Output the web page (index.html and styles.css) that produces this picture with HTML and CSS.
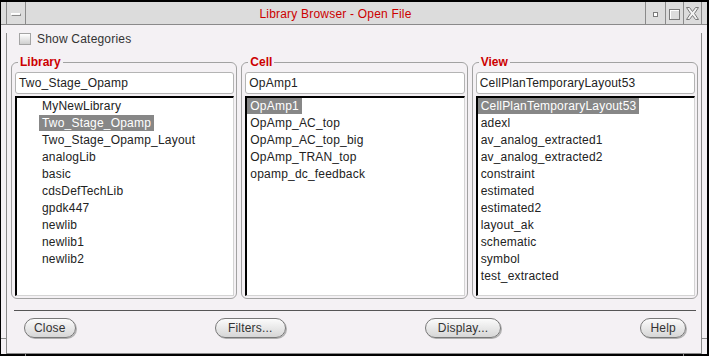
FILE: index.html
```html
<!DOCTYPE html>
<html>
<head>
    <title>Library Browser - Open File</title>
    <meta name="viewport" content="width=device-width, initial-scale=1.0">
    <link rel="stylesheet" href="styles.css">
</head>
<body>
<div class="window">
    <div class="titlebar">
        <div class="tb-edge"></div>
        <div class="tb-menu"><span class="menu-bar"></span></div>
        <div class="tb-title">Library Browser - Open File</div>
        <div class="tb-btn tb-wide"><span class="iconify"></span></div>
        <div class="tb-btn"><span class="maximize"></span></div>
        <div class="tb-btn">
            <svg width="13" height="13" viewBox="0 0 13 13">
                <polygon points="0.5,0.5 3.5,0.5 6.5,4.5 9.5,0.5 12.5,0.5 8.5,6.5 12.5,12.5 9.5,12.5 6.5,8.5 3.5,12.5 0.5,12.5 4.5,6.5" fill="#f2f2f2" stroke="#7a7a7a" stroke-width="1"/>
            </svg>
        </div>
        <div class="tb-edge tb-edge-right"></div>
    </div>

    <div class="frame">
        <span class="tick tick-left"></span>
        <span class="tick tick-right"></span>
        <span class="tick tick-foot-left"></span>
        <span class="tick tick-foot-right"></span>

        <div class="content">
            <div class="options">
                <span class="check"></span>
                <span>Show Categories</span>
            </div>

            <div class="panels">
                <fieldset class="group">
                    <legend>Library</legend>
                    <div class="field">Two_Stage_Opamp</div>
                    <ul class="list tree">
                        <li><span>MyNewLibrary</span></li>
                        <li class="selected"><span>Two_Stage_Opamp</span></li>
                        <li><span>Two_Stage_Opamp_Layout</span></li>
                        <li><span>analogLib</span></li>
                        <li><span>basic</span></li>
                        <li><span>cdsDefTechLib</span></li>
                        <li><span>gpdk447</span></li>
                        <li><span>newlib</span></li>
                        <li><span>newlib1</span></li>
                        <li><span>newlib2</span></li>
                    </ul>
                </fieldset>

                <fieldset class="group">
                    <legend>Cell</legend>
                    <div class="field">OpAmp1</div>
                    <ul class="list">
                        <li class="selected"><span>OpAmp1</span></li>
                        <li><span>OpAmp_AC_top</span></li>
                        <li><span>OpAmp_AC_top_big</span></li>
                        <li><span>OpAmp_TRAN_top</span></li>
                        <li><span>opamp_dc_feedback</span></li>
                    </ul>
                </fieldset>

                <fieldset class="group">
                    <legend>View</legend>
                    <div class="field">CellPlanTemporaryLayout53</div>
                    <ul class="list">
                        <li class="selected"><span>CellPlanTemporaryLayout53</span></li>
                        <li><span>adexl</span></li>
                        <li><span>av_analog_extracted1</span></li>
                        <li><span>av_analog_extracted2</span></li>
                        <li><span>constraint</span></li>
                        <li><span>estimated</span></li>
                        <li><span>estimated2</span></li>
                        <li><span>layout_ak</span></li>
                        <li><span>schematic</span></li>
                        <li><span>symbol</span></li>
                        <li><span>test_extracted</span></li>
                    </ul>
                </fieldset>
            </div>

            <div class="sep"></div>

            <div class="actions">
                <button>Close</button>
                <button class="wide">Filters...</button>
                <button class="wide">Display...</button>
                <button>Help</button>
            </div>
        </div>
    </div>
</div>
</body>
</html>
```

FILE: styles.css
```css
body {
    margin: 0;
    font-family: "Liberation Sans", Arial, sans-serif;
    font-size: 12px;
    letter-spacing: 0.2px;
    color: #2a2a2a;
    background: #fff;
}
.window {
    width: 709px;
    height: 356px;
    box-sizing: border-box;
    border-style: solid;
    border-color: #000;
    border-width: 2px 2px 2px 1px;
    background: #f4f1f4;
}

/* title bar */
.titlebar {
    display: flex;
    height: 22px;
    background: #dcdcdc;
    border-bottom: 1px solid #8a8a8a;
}
.tb-edge {
    width: 5px;
    border-right: 1px solid #8a8a8a;
}
.tb-edge-right {
    border-right: none;
}
.tb-menu {
    width: 18px;
    border-right: 1px solid #8a8a8a;
    display: flex;
    align-items: center;
    justify-content: center;
}
.menu-bar {
    width: 10px;
    height: 3px;
    box-sizing: border-box;
    margin-top: 2px;
    background: #f8f8f8;
    border: 1px solid #8a8a8a;
    border-top-color: #fff;
    border-left-color: #fff;
}
.tb-title {
    flex: 1;
    border-right: 1px solid #8a8a8a;
    text-align: center;
    line-height: 24px;
    color: #cc0000;
}
.tb-btn {
    width: 17px;
    border-right: 1px solid #8a8a8a;
    display: flex;
    align-items: center;
    justify-content: center;
}
.tb-wide {
    width: 19px;
}
.iconify {
    width: 5px;
    height: 5px;
    box-sizing: border-box;
    margin-top: 3px;
    border: 1px solid #7a7a7a;
    background: #fff;
}
.maximize {
    width: 11px;
    height: 11px;
    box-sizing: border-box;
    margin-top: 2px;
    border: 1px solid #7a7a7a;
    box-shadow: inset 1px 1px 0 #fff;
}

/* window frame */
.frame {
    position: relative;
    padding: 0 5px 8px 5px;
}
.tick {
    position: absolute;
    background: #8a8a8a;
}
.tick-left,
.tick-right {
    top: 305px;
    width: 5px;
    height: 1px;
}
.tick-left {
    left: 0;
}
.tick-right {
    right: 0;
}
.tick-foot-left,
.tick-foot-right {
    top: 321px;
    width: 1px;
    height: 8px;
}
.tick-foot-left {
    left: 24px;
}
.tick-foot-right {
    left: 682px;
}
.content {
    height: 320px;
    border: 1px solid #8a8a8a;
    border-top: none;
}

.options {
    display: flex;
    align-items: center;
    gap: 6px;
    height: 12px;
    margin: 8px 0 0 12px;
    color: #333;
}
.check {
    width: 12px;
    height: 12px;
    box-sizing: border-box;
    border: 1px solid #a4a4a4;
    background: linear-gradient(#ffffff, #cfcfcf);
}

/* library / cell / view groups */
.panels {
    display: flex;
    gap: 4px;
    margin-top: 10px;
    padding: 0 3px 0 4px;
}
.group {
    width: 227px;
    box-sizing: border-box;
    min-width: 0;
    margin: 0;
    padding: 3px 2px 2px 3px;
    border: 1px solid #a2a2a2;
    border-radius: 6px;
}
.group legend {
    margin-left: 3px;
    padding: 0 2px;
    font-weight: bold;
    line-height: 14px;
    color: #cc0000;
    letter-spacing: 0;
}
.field {
    height: 22px;
    box-sizing: border-box;
    padding: 0 3px;
    line-height: 21px;
    background: #fff;
    border: 1px solid #b4b4b4;
    border-radius: 3px;
    color: #222;
}
.list {
    height: 200px;
    box-sizing: border-box;
    margin: 2px 0 0 0;
    padding: 0;
    list-style: none;
    background: #fff;
    border-top: 2px solid #000;
    border-left: 2px solid #000;
    border-right: 1px solid #d4d4d4;
    border-bottom: 1px solid #d4d4d4;
    color: #222;
}
.list li {
    height: 17px;
}
.list span {
    display: inline-block;
    height: 16px;
    line-height: 16px;
    padding: 0 3px;
}
.tree li {
    padding-left: 22px;
}
.list .selected span {
    background: #878787;
    color: #fff;
}

.sep {
    margin: 11px 5px 0 7px;
    border-top: 1px solid #555;
}
.actions {
    display: flex;
    justify-content: space-between;
    margin-top: 7px;
    padding: 0 15px 0 17px;
}
button {
    height: 20px;
    padding: 0 9px;
    font-family: "Liberation Sans", Arial, sans-serif;
    font-size: 12px;
    letter-spacing: 0.2px;
    color: #333;
    background: linear-gradient(#fbfbfb, #d6d6d6);
    border: 1px solid #787878;
    border-radius: 10px;
    box-shadow: 1px 1px 0 #b0b0b0;
}
button.wide {
    padding: 0 12px;
}
```
